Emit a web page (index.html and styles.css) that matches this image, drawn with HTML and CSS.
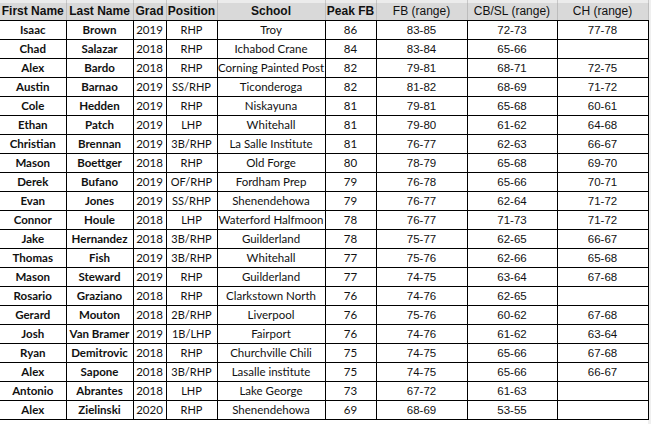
FILE: index.html
```html
<!DOCTYPE html>
<html>
<head>
<meta charset="utf-8">
<link rel="stylesheet" href="styles.css">
</head>
<body>
<div class="sheet">
<table class="grid">
<colgroup>
<col class="c-first"><col class="c-last"><col class="c-grad"><col class="c-pos"><col class="c-school"><col class="c-peak"><col class="c-fb"><col class="c-cb"><col class="c-ch">
</colgroup>
<thead>
<tr class="strip"><td></td><td></td><td></td><td></td><td></td><td></td><td></td><td></td><td></td></tr>
<tr class="head">
<th class="hb">First Name</th><th class="hb">Last Name</th><th class="hb">Grad</th><th class="hb">Position</th><th class="hb">School</th><th class="hb">Peak FB</th><th>FB (range)</th><th>CB/SL (range)</th><th>CH (range)</th>
</tr>
</thead>
<tbody>
<tr><td class="nm">Isaac</td><td class="nm">Brown</td><td class="cal">2019</td><td class="pos">RHP</td><td class="cal">Troy</td><td class="cal">86</td><td class="rg">83-85</td><td class="rg">72-73</td><td class="rg">77-78</td></tr>
<tr><td class="nm">Chad</td><td class="nm">Salazar</td><td class="cal">2018</td><td class="pos">RHP</td><td class="cal">Ichabod Crane</td><td class="cal">84</td><td class="rg">83-84</td><td class="rg">65-66</td><td class="rg"></td></tr>
<tr><td class="nm">Alex</td><td class="nm">Bardo</td><td class="cal">2018</td><td class="pos">RHP</td><td class="cal">Corning Painted Post</td><td class="cal">82</td><td class="rg">79-81</td><td class="rg">68-71</td><td class="rg">72-75</td></tr>
<tr><td class="nm">Austin</td><td class="nm">Barnao</td><td class="cal">2019</td><td class="pos">SS/RHP</td><td class="cal">Ticonderoga</td><td class="cal">82</td><td class="rg">81-82</td><td class="rg">68-69</td><td class="rg">71-72</td></tr>
<tr><td class="nm">Cole</td><td class="nm">Hedden</td><td class="cal">2019</td><td class="pos">RHP</td><td class="cal">Niskayuna</td><td class="cal">81</td><td class="rg">79-81</td><td class="rg">65-68</td><td class="rg">60-61</td></tr>
<tr><td class="nm">Ethan</td><td class="nm">Patch</td><td class="cal">2019</td><td class="pos">LHP</td><td class="cal">Whitehall</td><td class="cal">81</td><td class="rg">79-80</td><td class="rg">61-62</td><td class="rg">64-68</td></tr>
<tr><td class="nm">Christian</td><td class="nm">Brennan</td><td class="cal">2019</td><td class="pos">3B/RHP</td><td class="cal">La Salle Institute</td><td class="cal">81</td><td class="rg">76-77</td><td class="rg">62-63</td><td class="rg">66-67</td></tr>
<tr><td class="nm">Mason</td><td class="nm">Boettger</td><td class="cal">2018</td><td class="pos">RHP</td><td class="cal">Old Forge</td><td class="cal">80</td><td class="rg">78-79</td><td class="rg">65-68</td><td class="rg">69-70</td></tr>
<tr><td class="nm">Derek</td><td class="nm">Bufano</td><td class="cal">2019</td><td class="pos">OF/RHP</td><td class="cal">Fordham Prep</td><td class="cal">79</td><td class="rg">76-78</td><td class="rg">65-66</td><td class="rg">70-71</td></tr>
<tr><td class="nm">Evan</td><td class="nm">Jones</td><td class="cal">2019</td><td class="pos">SS/RHP</td><td class="cal">Shenendehowa</td><td class="cal">79</td><td class="rg">76-77</td><td class="rg">62-64</td><td class="rg">71-72</td></tr>
<tr><td class="nm">Connor</td><td class="nm">Houle</td><td class="cal">2018</td><td class="pos">LHP</td><td class="cal">Waterford Halfmoon</td><td class="cal">78</td><td class="rg">76-77</td><td class="rg">71-73</td><td class="rg">71-72</td></tr>
<tr><td class="nm">Jake</td><td class="nm">Hernandez</td><td class="cal">2018</td><td class="pos">3B/RHP</td><td class="cal">Guilderland</td><td class="cal">78</td><td class="rg">75-77</td><td class="rg">62-65</td><td class="rg">66-67</td></tr>
<tr><td class="nm">Thomas</td><td class="nm">Fish</td><td class="cal">2019</td><td class="pos">3B/RHP</td><td class="cal">Whitehall</td><td class="cal">77</td><td class="rg">75-76</td><td class="rg">62-66</td><td class="rg">65-68</td></tr>
<tr><td class="nm">Mason</td><td class="nm">Steward</td><td class="cal">2019</td><td class="pos">RHP</td><td class="cal">Guilderland</td><td class="cal">77</td><td class="rg">74-75</td><td class="rg">63-64</td><td class="rg">67-68</td></tr>
<tr><td class="nm">Rosario</td><td class="nm">Graziano</td><td class="cal">2018</td><td class="pos">RHP</td><td class="cal">Clarkstown North</td><td class="cal">76</td><td class="rg">74-76</td><td class="rg">62-65</td><td class="rg"></td></tr>
<tr><td class="nm">Gerard</td><td class="nm">Mouton</td><td class="cal">2018</td><td class="pos">2B/RHP</td><td class="cal">Liverpool</td><td class="cal">76</td><td class="rg">75-76</td><td class="rg">60-62</td><td class="rg">67-68</td></tr>
<tr><td class="nm">Josh</td><td class="nm">Van Bramer</td><td class="cal">2019</td><td class="pos">1B/LHP</td><td class="cal">Fairport</td><td class="cal">76</td><td class="rg">74-76</td><td class="rg">61-62</td><td class="rg">63-64</td></tr>
<tr><td class="nm">Ryan</td><td class="nm">Demitrovic</td><td class="cal">2018</td><td class="pos">RHP</td><td class="cal">Churchville Chili</td><td class="cal">75</td><td class="rg">74-75</td><td class="rg">65-66</td><td class="rg">67-68</td></tr>
<tr><td class="nm">Alex</td><td class="nm">Sapone</td><td class="cal">2018</td><td class="pos">3B/RHP</td><td class="cal">Lasalle institute</td><td class="cal">75</td><td class="rg">74-75</td><td class="rg">65-66</td><td class="rg">66-67</td></tr>
<tr><td class="nm">Antonio</td><td class="nm">Abrantes</td><td class="cal">2018</td><td class="pos">LHP</td><td class="cal">Lake George</td><td class="cal">73</td><td class="rg">67-72</td><td class="rg">61-63</td><td class="rg"></td></tr>
<tr><td class="nm">Alex</td><td class="nm">Zielinski</td><td class="cal">2020</td><td class="pos">RHP</td><td class="cal">Shenendehowa</td><td class="cal">69</td><td class="rg">68-69</td><td class="rg">53-55</td><td class="rg"></td></tr>
</tbody>
</table>
</div>
</body>
</html>
```

FILE: styles.css
```css
html, body {
  margin: 0;
  padding: 0;
  background: #ffffff;
}

.sheet {
  width: 651px;
  height: 424px;
  overflow: hidden;
  background: linear-gradient(to right, #ffffff 0, #ffffff 648px, #efefef 648px);
}

.grid {
  border-collapse: collapse;
  table-layout: fixed;
  width: 648px;
  color: #111111;
}

.c-first { width: 66px; }
.c-last { width: 67px; }
.c-grad { width: 33px; }
.c-pos { width: 51px; }
.c-school { width: 108px; }
.c-peak { width: 51px; }
.c-fb { width: 91px; }
.c-cb { width: 90px; }
.c-ch { width: 91px; }

.grid td, .grid th {
  padding: 0;
  text-align: center;
  white-space: nowrap;
  overflow: hidden;
  line-height: 18px;
}

.strip td {
  height: 3px;
  line-height: 3px;
  background: #ececec;
  border-left: 1px solid #c8c8c8;
  border-right: 1px solid #c8c8c8;
}

.head th {
  height: 17px;
  line-height: 17px;
  background: #d9d9d9;
  border-left: 1px solid #bdbdbd;
  border-right: 1px solid #bdbdbd;
  border-bottom: 1px solid #000000;
  font-family: "Liberation Sans", Arial, sans-serif;
  font-size: 12px;
  font-weight: normal;
  color: #111111;
}

.head th.hb {
  font-weight: bold;
}

.grid tbody td {
  height: 18px;
  border: 1px solid #000000;
}

.grid tbody td:first-child,
.grid thead td:first-child,
.grid thead th:first-child {
  border-left: none;
}

.nm {
  font-family: Lato, "Liberation Sans", sans-serif;
  font-weight: bold;
  font-size: 11.5px;
}

.cal {
  font-family: Lato, "Liberation Sans", sans-serif;
  font-size: 11.5px;
}

.pos {
  font-family: Lato, "Liberation Sans", sans-serif;
  font-size: 11px;
}

.rg {
  font-family: "Liberation Sans", Arial, sans-serif;
  font-size: 11.5px;
}
```
